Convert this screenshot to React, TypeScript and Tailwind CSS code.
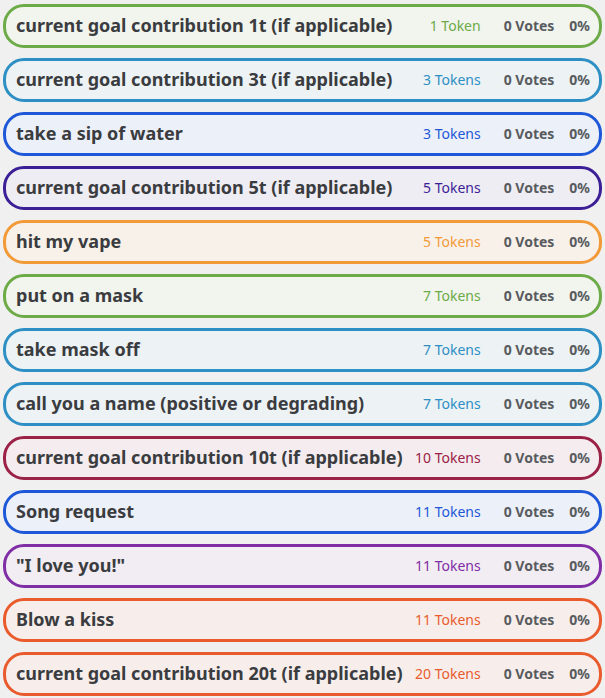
import React from 'react';

type Row = { label: string; tokens: string; box: string; tok: string };

const rows: Row[] = [
  { label: 'current goal contribution 1t (if applicable)', tokens: '1 Token', box: 'border-[#6cab47] bg-[#f2f4ee]', tok: 'text-[#6cab47]' },
  { label: 'current goal contribution 3t (if applicable)', tokens: '3 Tokens', box: 'border-[#2e8fc4] bg-[#edf2f5]', tok: 'text-[#2e8fc4]' },
  { label: 'take a sip of water', tokens: '3 Tokens', box: 'border-[#1e58d8] bg-[#ecf0f8]', tok: 'text-[#1e58d8]' },
  { label: 'current goal contribution 5t (if applicable)', tokens: '5 Tokens', box: 'border-[#3c1f96] bg-[#efedf4]', tok: 'text-[#3c1f96]' },
  { label: 'hit my vape', tokens: '5 Tokens', box: 'border-[#f29a38] bg-[#f8f1ea]', tok: 'text-[#f29a38]' },
  { label: 'put on a mask', tokens: '7 Tokens', box: 'border-[#6cab47] bg-[#f2f4ee]', tok: 'text-[#6cab47]' },
  { label: 'take mask off', tokens: '7 Tokens', box: 'border-[#2e8fc4] bg-[#edf2f5]', tok: 'text-[#2e8fc4]' },
  { label: 'call you a name (positive or degrading)', tokens: '7 Tokens', box: 'border-[#2e8fc4] bg-[#edf2f5]', tok: 'text-[#2e8fc4]' },
  { label: 'current goal contribution 10t (if applicable)', tokens: '10 Tokens', box: 'border-[#9c2146] bg-[#f4ecef]', tok: 'text-[#9c2146]' },
  { label: 'Song request', tokens: '11 Tokens', box: 'border-[#1e58d8] bg-[#ecf0f8]', tok: 'text-[#1e58d8]' },
  { label: '"I love you!"', tokens: '11 Tokens', box: 'border-[#7f2ea6] bg-[#f2ecf3]', tok: 'text-[#7f2ea6]' },
  { label: 'Blow a kiss', tokens: '11 Tokens', box: 'border-[#e95b2d] bg-[#f7eeeb]', tok: 'text-[#e95b2d]' },
  { label: 'current goal contribution 20t (if applicable)', tokens: '20 Tokens', box: 'border-[#e95b2d] bg-[#f7eeeb]', tok: 'text-[#e95b2d]' },
];

export default function App() {
  return (
    <div className="min-h-screen bg-[#f0f0f0] px-[3px] pt-[4px] font-['Noto_Sans',sans-serif]">
      {rows.map((r, i) => (
        <div
          key={i}
          className={`mb-[10px] flex h-[44px] items-center rounded-[21px] border-[3px] pb-[2px] pl-[10px] pr-[9px] ${r.box}`}
        >
          <span className="flex-1 truncate text-[18px] font-bold text-[#3a3c3f]">{r.label}</span>
          <span className={`text-[14px] ${r.tok}`}>{r.tokens}</span>
          <span className="ml-[23px] text-[14px] font-bold text-[#585b5e]">0 Votes</span>
          <span className="ml-[15px] text-[14px] font-bold text-[#585b5e]">0%</span>
        </div>
      ))}
    </div>
  );
}
